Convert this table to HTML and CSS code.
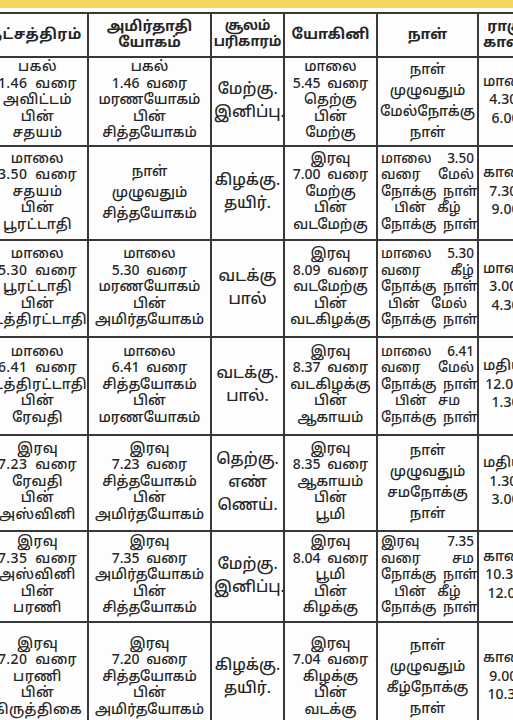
FILE: index.html
```html
<!DOCTYPE html>
<html lang="ta">
<head>
<meta charset="utf-8">
<title>பஞ்சாங்கம்</title>
<link rel="stylesheet" href="styles.css">
</head>
<body>
<div class="page">
  <div class="band"></div>
  <table class="panchang">
    <colgroup>
      <col class="c1"><col class="c2"><col class="c3"><col class="c4"><col class="c5"><col class="c6">
    </colgroup>
    <thead>
      <tr class="rh">
        <th class="first">நட்சத்திரம்</th>
        <th>அமிர்தாதி<br>யோகம்</th>
        <th class="tight">சூலம்<br>பரிகாரம்</th>
        <th>யோகினி</th>
        <th>நாள்</th>
        <th class="last">ராகு<br>காலம்</th>
      </tr>
    </thead>
    <tbody>
      <tr class="r1">
        <td class="first">பகல்<br>1.46 வரை<br>அவிட்டம்<br>பின்<br>சதயம்</td>
        <td>பகல்<br>1.46 வரை<br>மரணயோகம்<br>பின்<br>சித்தயோகம்</td>
        <td class="sul">மேற்கு.<br>இனிப்பு.</td>
        <td>மாலை<br>5.45 வரை<br>தெற்கு<br>பின்<br>மேற்கு</td>
        <td class="sp">நாள்<br>முழுவதும்<br>மேல்நோக்கு<br>நாள்</td>
        <td class="last">மாலை<br>4.30-<br>6.00</td>
      </tr>
      <tr class="r2">
        <td class="first">மாலை<br>3.50 வரை<br>சதயம்<br>பின்<br>பூரட்டாதி</td>
        <td class="sp">நாள்<br>முழுவதும்<br>சித்தயோகம்</td>
        <td class="sul">கிழக்கு.<br>தயிர்.</td>
        <td>இரவு<br>7.00 வரை<br>மேற்கு<br>பின்<br>வடமேற்கு</td>
        <td class="just"><span>மாலை 3.50</span><span>வரை மேல்</span><span>நோக்கு நாள்</span><span class="mid">பின் கீழ்</span><span>நோக்கு நாள்</span></td>
        <td class="last">காலை<br>7.30-<br>9.00</td>
      </tr>
      <tr class="r3">
        <td class="first">மாலை<br>5.30 வரை<br>பூரட்டாதி<br>பின்<br>உத்திரட்டாதி</td>
        <td>மாலை<br>5.30 வரை<br>மரணயோகம்<br>பின்<br>அமிர்தயோகம்</td>
        <td class="sul">வடக்கு<br>பால்</td>
        <td>இரவு<br>8.09 வரை<br>வடமேற்கு<br>பின்<br>வடகிழக்கு</td>
        <td class="just"><span>மாலை 5.30</span><span>வரை கீழ்</span><span>நோக்கு நாள்</span><span class="mid">பின் மேல்</span><span>நோக்கு நாள்</span></td>
        <td class="last">மாலை<br>3.00-<br>4.30</td>
      </tr>
      <tr class="r4">
        <td class="first">மாலை<br>6.41 வரை<br>உத்திரட்டாதி<br>பின்<br>ரேவதி</td>
        <td>மாலை<br>6.41 வரை<br>சித்தயோகம்<br>பின்<br>மரணயோகம்</td>
        <td class="sul">வடக்கு.<br>பால்.</td>
        <td>இரவு<br>8.37 வரை<br>வடகிழக்கு<br>பின்<br>ஆகாயம்</td>
        <td class="just"><span>மாலை 6.41</span><span>வரை மேல்</span><span>நோக்கு நாள்</span><span class="mid">பின் சம</span><span>நோக்கு நாள்</span></td>
        <td class="last">மதியம்<br>12.00-<br>1.30</td>
      </tr>
      <tr class="r5">
        <td class="first">இரவு<br>7.23 வரை<br>ரேவதி<br>பின்<br>அஸ்வினி</td>
        <td>இரவு<br>7.23 வரை<br>சித்தயோகம்<br>பின்<br>அமிர்தயோகம்</td>
        <td class="sul">தெற்கு.<br>எண்<br>ணெய்.</td>
        <td>இரவு<br>8.35 வரை<br>ஆகாயம்<br>பின்<br>பூமி</td>
        <td class="sp">நாள்<br>முழுவதும்<br>சமநோக்கு<br>நாள்</td>
        <td class="last">மதியம்<br>1.30-<br>3.00</td>
      </tr>
      <tr class="r6">
        <td class="first">இரவு<br>7.35 வரை<br>அஸ்வினி<br>பின்<br>பரணி</td>
        <td>இரவு<br>7.35 வரை<br>அமிர்தயோகம்<br>பின்<br>சித்தயோகம்</td>
        <td class="sul">மேற்கு.<br>இனிப்பு.</td>
        <td>இரவு<br>8.04 வரை<br>பூமி<br>பின்<br>கிழக்கு</td>
        <td class="just"><span>இரவு 7.35</span><span>வரை சம</span><span>நோக்கு நாள்</span><span class="mid">பின் கீழ்</span><span>நோக்கு நாள்</span></td>
        <td class="last">காலை<br>10.30-<br>12.00</td>
      </tr>
      <tr class="r7">
        <td class="first">இரவு<br>7.20 வரை<br>பரணி<br>பின்<br>கிருத்திகை</td>
        <td>இரவு<br>7.20 வரை<br>சித்தயோகம்<br>பின்<br>அமிர்தயோகம்</td>
        <td class="sul">கிழக்கு.<br>தயிர்.</td>
        <td>இரவு<br>7.04 வரை<br>கிழக்கு<br>பின்<br>வடக்கு</td>
        <td class="sp">நாள்<br>முழுவதும்<br>கீழ்நோக்கு<br>நாள்</td>
        <td class="last">காலை<br>9.00-<br>10.30</td>
      </tr>
    </tbody>
  </table>
</div>
</body>
</html>
```
FILE: styles.css
```css
html, body {
  margin: 0;
  padding: 0;
  background: #ffffff;
}
.page {
  width: 513px;
  height: 720px;
  overflow: hidden;
  background: #fdfdfd;
}
.band {
  height: 8px;
  background: #f6d55c;
  margin-bottom: 4px;
}
.panchang {
  border-collapse: collapse;
  table-layout: fixed;
  width: 570px;
  margin-left: -40px;
  font-family: "Noto Sans Tamil", "Lohit Tamil", "Noto Sans", "DejaVu Sans", sans-serif;
  font-size: 14px;
  line-height: 16.5px;
  font-weight: 500;
  color: #262626;
}
.c1 { width: 127px; }
.c2 { width: 123px; }
.c3 { width: 73px; }
.c4 { width: 93px; }
.c5 { width: 101px; }
.c6 { width: 53px; }
.panchang th,
.panchang td {
  border: 2px solid #383838;
  text-align: center;
  vertical-align: middle;
  padding: 0 2px;
  white-space: nowrap;
  overflow: hidden;
  word-spacing: 3px;
}
.panchang th {
  font-weight: 700;
  font-size: 14.5px;
  line-height: 16.5px;
  padding-top: 0;
}
.panchang .first {
  padding-left: 26px;
  padding-right: 0;
  letter-spacing: 0.4px;
  word-spacing: 4px;
}
.panchang th.first {
  padding-left: 22px;
}
.panchang .tight {
  padding: 0;
  font-size: 13.5px;
  letter-spacing: -0.2px;
}
.panchang .sul {
  font-size: 15.5px;
  line-height: 23px;
}
.panchang .sp {
  line-height: 21px;
}
.panchang .just {
  padding: 0 3px;
  font-size: 13.5px;
}
.panchang .just span {
  display: block;
  text-align: justify;
  text-align-last: justify;
}
.panchang .just span.mid {
  text-align: center;
  text-align-last: center;
  word-spacing: 8px;
}
.panchang .last {
  padding: 0 2px 0 4px;
  line-height: 18.5px;
}
.panchang th.last {
  line-height: 16.5px;
}
.rh { height: 44px; }
.r1 { height: 89px; }
.r2 { height: 94px; }
.r3 { height: 97px; }
.r4 { height: 98px; }
.r5 { height: 96px; }
.r6 { height: 91px; }
.r7 { height: 112px; }
```
